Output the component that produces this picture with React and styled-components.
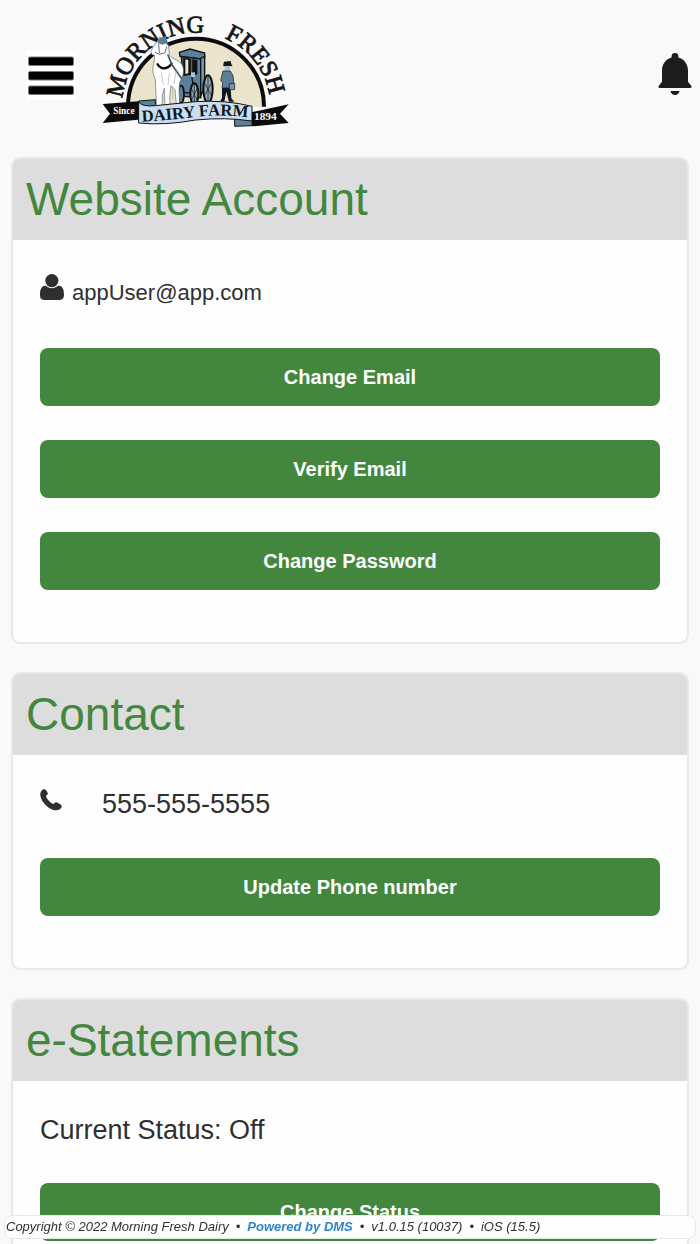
import React from "react";
import styled, { createGlobalStyle } from "styled-components";

const GlobalStyle = createGlobalStyle`
  * { box-sizing: border-box; }
  body {
    margin: 0;
    background: #f9f9f9;
    color: #2f2f2f;
    font-family: "Liberation Sans", Arial, sans-serif;
  }
`;

const Page = styled.div`
  padding-bottom: 40px;
`;

const TopBar = styled.header`
  display: flex;
  align-items: center;
  height: 150px;
  padding: 0 8px 0 26px;
`;

const IconButton = styled.button`
  display: block;
  padding: 0;
  border: 0;
  background: ${(p) => p.$background || "transparent"};
  line-height: 0;
  cursor: pointer;
`;

const HomeLink = styled.a`
  margin: 0 auto 10px 26px;
  line-height: 0;
`;

const Main = styled.main`
  display: flex;
  flex-direction: column;
  gap: 28px;
  padding: 7px 11px 0;
`;

const Card = styled.section`
  overflow: hidden;
  border: 2px solid #e8e8e8;
  border-radius: 9px;
  background: #fefefe;
`;

const CardTitle = styled.h2`
  margin: 0;
  padding: 14px 13px 15px;
  background: #dddddd;
  color: #43873f;
  font-size: 46px;
  font-weight: 400;
  line-height: 52px;
`;

const CardBody = styled.div`
  display: flex;
  flex-direction: column;
  gap: 34px;
  padding: 32px 27px 52px;
`;

const InfoRow = styled.div`
  display: flex;
  align-items: baseline;
  gap: ${(p) => p.$gap || 0}px;
  height: ${(p) => p.$height}px;
  font-size: ${(p) => p.$size || 27}px;
  line-height: ${(p) => p.$line || 34}px;
`;

const ActionButton = styled.button`
  width: 100%;
  height: 58px;
  border: 0;
  border-radius: 8px;
  background: #43873f;
  color: #fff;
  font: bold 20px "Liberation Sans", Arial, sans-serif;
  cursor: pointer;
`;

const Footer = styled.footer`
  position: fixed;
  right: 4px;
  bottom: 5px;
  left: 4px;
  padding: 0 1px;
  border: 1px solid #e8e8e8;
  border-radius: 8px;
  background: #fefefe;
  font-size: 13px;
  font-style: italic;
  line-height: 22px;
  white-space: nowrap;
`;

const Bullet = styled.span`
  margin: 0 7px;
`;

const VendorLink = styled.a`
  color: #2f86cc;
  font-weight: bold;
  text-decoration: none;
`;

function MenuIcon() {
  return (
    <svg width="50" height="50" viewBox="0 0 50 50" aria-hidden="true">
      <g fill="#000" stroke="#777" strokeWidth="1">
        <rect x="2.5" y="7" width="45" height="8.5" rx="1.5" />
        <rect x="2.5" y="21.500" width="45" height="8.5" rx="1.5" />
        <rect x="2.5" y="36" width="45" height="8.5" rx="1.5" />
      </g>
    </svg>
  );
}

function BellIcon() {
  return (
    <svg width="34" height="44" viewBox="0 0 34 44" fill="#1c1c1c" aria-hidden="true">
      <path d="M17 0a3.400 3.400 0 0 0-3.400 3.400v1.200C7.800 6.300 4 11 4 17.500v11.200L.8 32.700c-.8 1.300-.2 2.300 1.200 2.300h30c1.400 0 2-1 1.200-2.300L30 28.700V17.500C30 11 26.200 6.300 20.400 4.600V3.400A3.400 3.400 0 0 0 17 0z" />
      <path d="M12.500 38h9c-.5 2.500-2.200 4-4.500 4s-4-1.500-4.500-4z" />
    </svg>
  );
}

function UserIcon() {
  return (
    <svg width="24" height="26" viewBox="0 0 73 79" fill="currentColor" aria-hidden="true">
      <circle cx="36" cy="20" r="20" />
      <path d="M16 36C21 36 23 43 36 43S52 36 57 36C70 36 73 50 73 64C73 74 68 79 60 79H12C4 79 0 74 0 64C0 50 3 36 16 36z" />
    </svg>
  );
}

function PhoneIcon() {
  return (
    <svg width="22" height="24" viewBox="0 0 66 72" fill="currentColor" aria-hidden="true">
      <path d="M8 2C12-1 17 1 20 6L23 12C25 16 20 18 18 21C20 30 30 41 40 45C44 42 46 38 50 40L61 46C66 49 66 54 63 58C58 64 48 65 38 62C20 56 6 38 2 24C-1 14 2 6 8 2z" />
    </svg>
  );
}

function FarmLogo() {
  return (
    <svg width="188" height="117" viewBox="20 21 564 351" role="img" aria-label="Morning Fresh Dairy Farm">
      <defs>
        <path id="nameArc" d="M80 305A222 222 0 0 1 524 305" />
        <path id="ribbonLine" d="M140 350Q220 346 300 336T464 338" />
      </defs>
      <path d="M20 36H584V372H20z" fill="#fafafa" />
      <path d="M98 305A204 204 0 0 1 506 305" fill="#ebe4cc" stroke="#0c0c0c" strokeWidth="12" />
      <g fill="#161616" stroke="#161616" strokeWidth="2.500" fontFamily="Liberation Serif, serif" fontSize="73">
        <text><textPath href="#nameArc" startOffset="24">MORNING</textPath></text>
        <text><textPath href="#nameArc" startOffset="436">FRESH</textPath></text>
      </g>

      <g stroke="#111" strokeWidth="4" fill="none">
        <path d="M252 142l32-10 44 12v14l-12 4-62-8z" fill="#5c7f9b" />
        <path d="M258 154l58 8v116l-50-4z" fill="#5c7f9b" />
        <path d="M316 160l12-6v90l-12 30z" fill="#7496b0" />
        <path d="M264 158l22 4v50l-22 4zM291 164l14 2v42h-14z" fill="#111" strokeWidth="2" />
        <path d="M270 163l9 2v40l-9 2z" fill="#ebe4cc" stroke="none" />
        <path d="M240 215l48-8 10 58-54-4z" fill="#5c7f9b" />
        <path d="M287 202h12v14h-12z" fill="#a8c4dc" stroke="none" />
        <ellipse cx="338" cy="252" rx="14" ry="41" fill="#8ca6b6" strokeWidth="6" />
        <ellipse cx="297" cy="267" rx="12" ry="32" fill="#8ca6b6" strokeWidth="6" />
        <ellipse cx="257" cy="268" rx="9" ry="26" fill="#5c7f9b" strokeWidth="5" />
        <path d="M338 214v78M327 233l22 40M349 233l-22 40M297 236v62M288 250l18 36M306 250l-18 36" strokeWidth="2" />
      </g>

      <g strokeLinejoin="round" strokeLinecap="round">
        <path d="M188 106l4-10 8 6 10-8 4 12 6 18 2 26c8 10 22 14 32 22 10 8 12 22 9 38l-10 22-2 26 2 40h-10l-4-44-12-12-4 36 2 30-16 4-2-62-6 20-1 40-16-1-2-40-2-46c-8-16-10-34-4-50l2-22-8-2-3-9 5-12z" fill="#fff" stroke="#62686c" strokeWidth="2" />
        <path d="M188 107l6-7 14-4 6 12 4 12-8-6-8 4-12-4z" fill="#5c7f9b" stroke="#41596b" strokeWidth="2" />
        <path d="M180 142l12 6 16-4 6-18M190 118l2 26" fill="none" stroke="#5d6f7c" strokeWidth="3" />
        <path d="M187 178c10 16 28 16 42-2" fill="none" stroke="#111" strokeWidth="7" />
        <path d="M218 150l10 26 30 44" fill="none" stroke="#41596b" strokeWidth="5" />
        <path d="M198 204l6 36M222 204l-4 34M242 200l-6 36M208 250l-2 36M232 246v36" fill="none" stroke="#a6acb0" strokeWidth="2" />
      </g>

      <path d="M384 178l2-8 20-2 2 10 4 5-28 1z" fill="#121820" />
      <path d="M388 184h16v12l-8 6-8-6z" fill="#a8c4dc" />
      <path d="M383 198h22l8 14 3 26-9 4-3 8h-24l2-16-6-8z" fill="#5c7f9b" stroke="#111" strokeWidth="2" />
      <path d="M380 248h26l2 32 9 10h-16l-8-30-6 30h-13l6-12z" fill="#111820" />
      <path d="M402 236h16v18h-16z" fill="#7496b0" stroke="#111" strokeWidth="2" />

      <path d="M22 297l108-8 12 50-14 5-106 10 22-28z" fill="#0b0b0b" />
      <path d="M466 322l114-24-26 28 26 28-110 10z" fill="#0b0b0b" />
      <path d="M130 288l50-4v14l-38 40z" fill="#5c7f9b" stroke="#111" strokeWidth="3" />
      <path d="M418 334l52-8v36l-52 2z" fill="#5c7f9b" stroke="#111" strokeWidth="3" />
      <path d="M130 290Q138 306 180 302L300 290Q390 284 470 304V348Q390 336 300 345Q210 362 130 354z" fill="#c9def2" stroke="#111" strokeWidth="3" />
      <g fontFamily="Liberation Serif, serif" fontWeight="bold">
        <text fontSize="50" fill="#101820"><textPath href="#ribbonLine">DAIRY FARM</textPath></text>
        <text x="54" y="328" fontSize="28" fill="#fff">Since</text>
        <text x="476" y="346" fontSize="34" fill="#fff">1894</text>
      </g>
    </svg>
  );
}

export default function App() {
  return (
    <>
      <GlobalStyle />
      <Page>
        <TopBar>
          <IconButton type="button" aria-label="Menu" $background="#fff">
            <MenuIcon />
          </IconButton>
          <HomeLink href="#home"><FarmLogo /></HomeLink>
          <IconButton type="button" aria-label="Notifications">
            <BellIcon />
          </IconButton>
        </TopBar>

        <Main>
          <Card>
            <CardTitle>Website Account</CardTitle>
            <CardBody>
              <InfoRow $size={22} $gap={8} $height={42} $line={42}>
                <UserIcon />
                <span>appUser@app.com</span>
              </InfoRow>
              <ActionButton type="button">Change Email</ActionButton>
              <ActionButton type="button">Verify Email</ActionButton>
              <ActionButton type="button">Change Password</ActionButton>
            </CardBody>
          </Card>

          <Card>
            <CardTitle>Contact</CardTitle>
            <CardBody>
              <InfoRow $gap={40} $height={37}>
                <PhoneIcon />
                <span>555-555-5555</span>
              </InfoRow>
              <ActionButton type="button">Update Phone number</ActionButton>
            </CardBody>
          </Card>

          <Card>
            <CardTitle>e-Statements</CardTitle>
            <CardBody>
              <InfoRow $height={36}>Current Status: Off</InfoRow>
              <ActionButton type="button">Change Status</ActionButton>
            </CardBody>
          </Card>
        </Main>
      </Page>

      <Footer>
        Copyright © 2022 Morning Fresh Dairy
        <Bullet>•</Bullet>
        <VendorLink href="#dms">Powered by DMS</VendorLink>
        <Bullet>•</Bullet>
        v1.0.15 (10037)
        <Bullet>•</Bullet>
        iOS (15.5)
      </Footer>
    </>
  );
}
